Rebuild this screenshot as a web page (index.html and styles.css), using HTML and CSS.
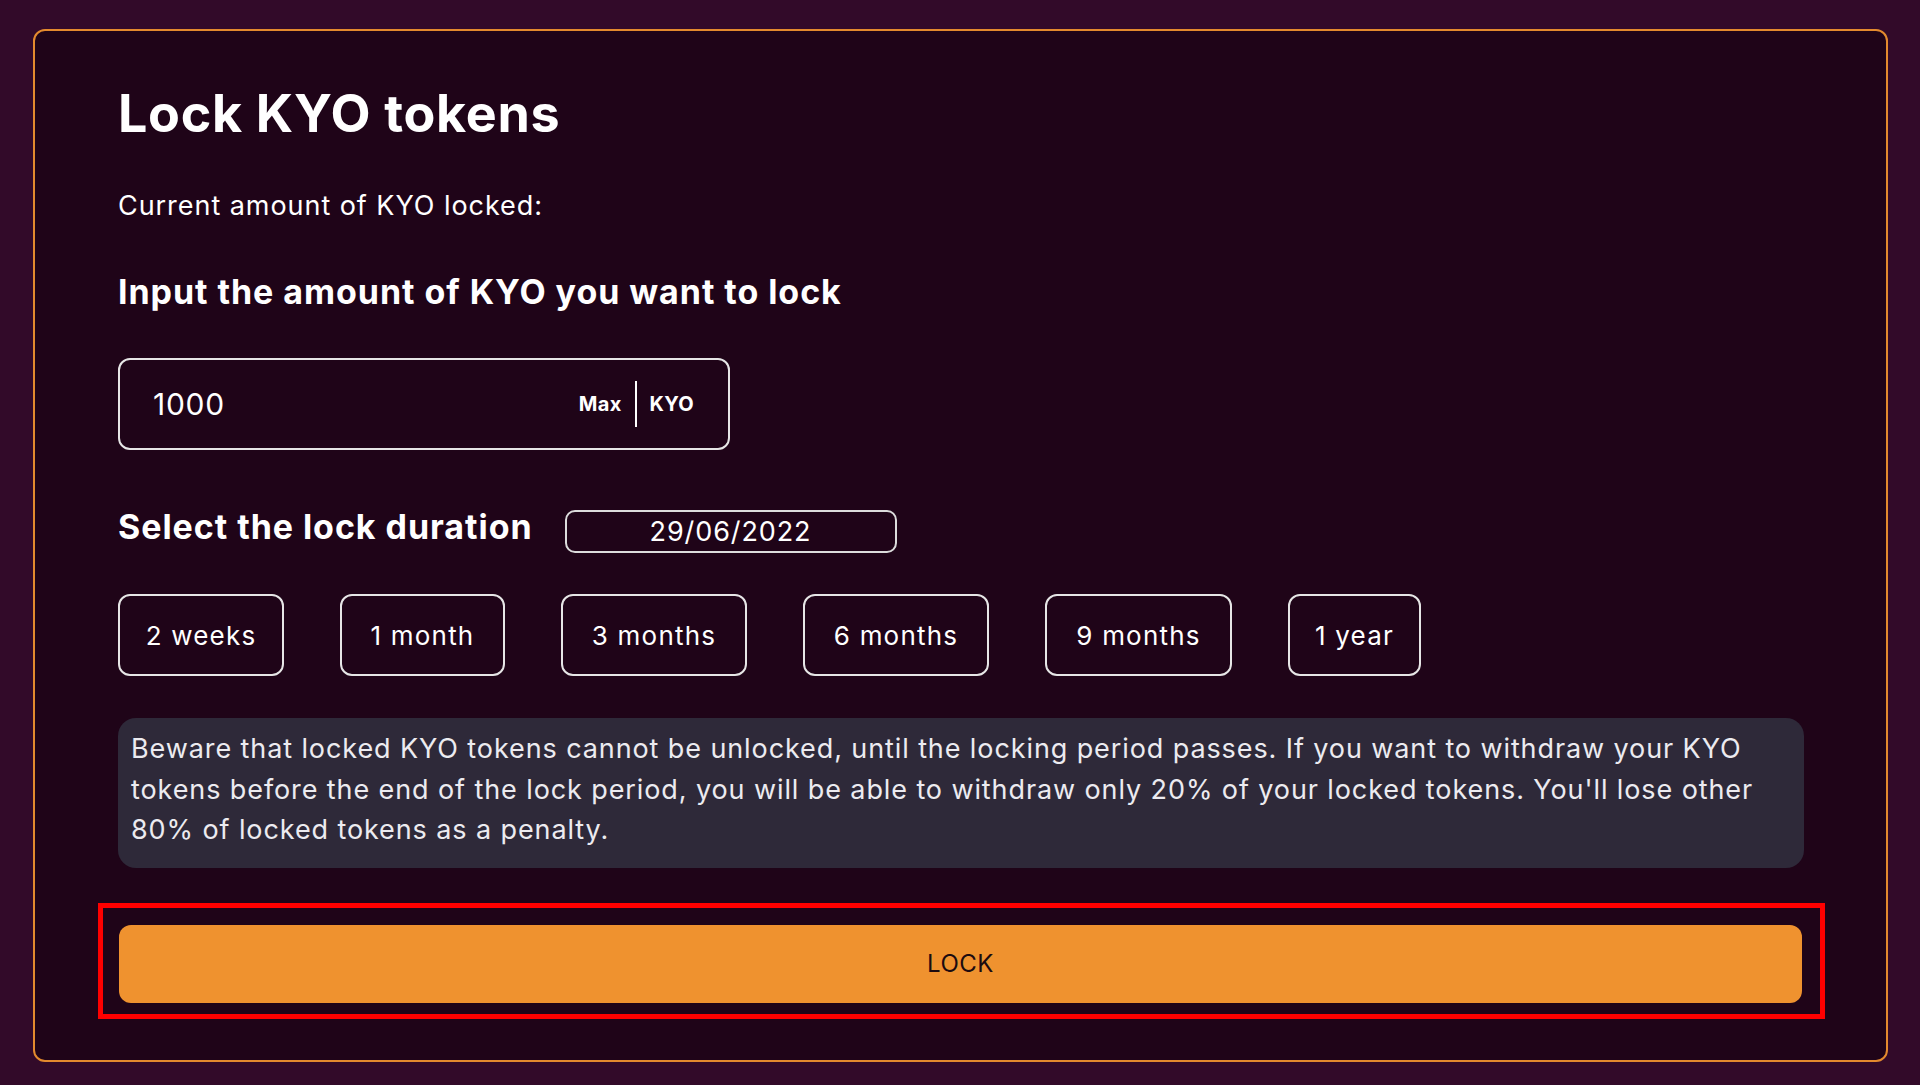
FILE: index.html
```html
<!DOCTYPE html>
<html lang="en">
<head>
<meta charset="utf-8">
<title>Lock KYO tokens</title>
<link rel="stylesheet" href="styles.css">
</head>
<body>
<main class="card">
  <h1 class="title">Lock KYO tokens</h1>
  <p class="current">Current amount of KYO locked:</p>
  <h2 class="heading heading-input">Input the amount of KYO you want to lock</h2>
  <div class="amount-box">
    <span class="amount-value">1000</span>
    <div class="amount-suffix">
      <span class="max">Max</span>
      <span class="divider"></span>
      <span class="unit">KYO</span>
    </div>
  </div>
  <div class="duration-row">
    <h2 class="heading">Select the lock duration</h2>
    <div class="date-box">29/06/2022</div>
  </div>
  <div class="periods">
    <button class="period">2 weeks</button>
    <button class="period">1 month</button>
    <button class="period">3 months</button>
    <button class="period">6 months</button>
    <button class="period">9 months</button>
    <button class="period">1 year</button>
  </div>
  <div class="warning">Beware that locked KYO tokens cannot be unlocked, until the locking period passes. If you want to withdraw your KYO tokens before the end of the lock period, you will be able to withdraw only 20% of your locked tokens. You'll lose other 80% of locked tokens as a penalty.</div>
  <div class="highlight">
    <button class="lock-btn">LOCK</button>
  </div>
</main>
</body>
</html>
```

FILE: styles.css
```css
* { box-sizing: border-box; }

html, body {
  margin: 0;
  padding: 0;
}

body {
  background: #320a29;
  font-family: Inter, "Noto Sans", "Liberation Sans", sans-serif;
  color: #ffffff;
  padding: 29px 32px 0 33px;
  min-height: 1085px;
}

.card {
  display: flex;
  flex-direction: column;
  align-items: flex-start;
  background: #1f0418;
  border: 2px solid #e38a2e;
  border-radius: 12px;
  padding: 53px 82px 41px 83px;
}

.title {
  margin: 0;
  font-size: 52px;
  line-height: 60px;
  font-weight: 700;
  letter-spacing: 0.7px;
}

.current {
  margin: 46px 0 0;
  font-size: 27px;
  line-height: 32px;
  font-weight: 400;
  letter-spacing: 0.95px;
}

.heading {
  margin: 0;
  font-size: 34px;
  line-height: 40px;
  font-weight: 700;
  letter-spacing: 0.95px;
}

.heading-input {
  margin-top: 50px;
}

.amount-box {
  margin-top: 46px;
  width: 612px;
  height: 92px;
  border: 2px solid #e6e6e6;
  border-radius: 12px;
  display: flex;
  align-items: center;
  justify-content: space-between;
  padding: 0 34px 0 33px;
}

.amount-value {
  font-size: 30px;
  font-weight: 400;
  letter-spacing: 0.7px;
}

.amount-suffix {
  display: flex;
  align-items: center;
}

.max, .unit {
  font-size: 20px;
  font-weight: 700;
  letter-spacing: 0.3px;
}

.divider {
  width: 2px;
  height: 46px;
  background: #ffffff;
  margin: 0 13px 0 13px;
}

.duration-row {
  margin-top: 57px;
  display: flex;
  align-items: flex-start;
  gap: 32px;
}

.date-box {
  margin-top: 3px;
  width: 332px;
  height: 43px;
  border: 2px solid #dcdcdc;
  border-radius: 10px;
  display: flex;
  align-items: center;
  justify-content: center;
  font-size: 27px;
  letter-spacing: 0.9px;
}

.periods {
  margin-top: 41px;
  display: flex;
  gap: 56px;
}

.period {
  height: 82px;
  padding: 0;
  background: transparent;
  border: 2px solid #e6e6e6;
  border-radius: 12px;
  color: #ffffff;
  font-family: inherit;
  font-size: 26px;
  letter-spacing: 1.2px;
  text-align: center;
}

.period:nth-child(1) { width: 166px; }
.period:nth-child(2) { width: 165px; }
.period:nth-child(3) { width: 186px; }
.period:nth-child(4) { width: 186px; }
.period:nth-child(5) { width: 187px; }
.period:nth-child(6) { width: 133px; }

.warning {
  margin-top: 42px;
  align-self: stretch;
  background: #2e2939;
  border-radius: 18px;
  padding: 11px 20px 17px 13px;
  font-size: 27px;
  line-height: 40.5px;
  color: #ecebf0;
  letter-spacing: 0.9px;
}

.highlight {
  margin: 35px -21px 0 -20px;
  align-self: stretch;
  border: 5px solid #ff0000;
  padding: 17px 18px 11px 16px;
}

.lock-btn {
  display: block;
  width: 100%;
  height: 78px;
  background: #ef922f;
  border: none;
  border-radius: 12px;
  color: #1c0b10;
  font-family: inherit;
  font-size: 24px;
  font-weight: 400;
  letter-spacing: 0.5px;
}
```
